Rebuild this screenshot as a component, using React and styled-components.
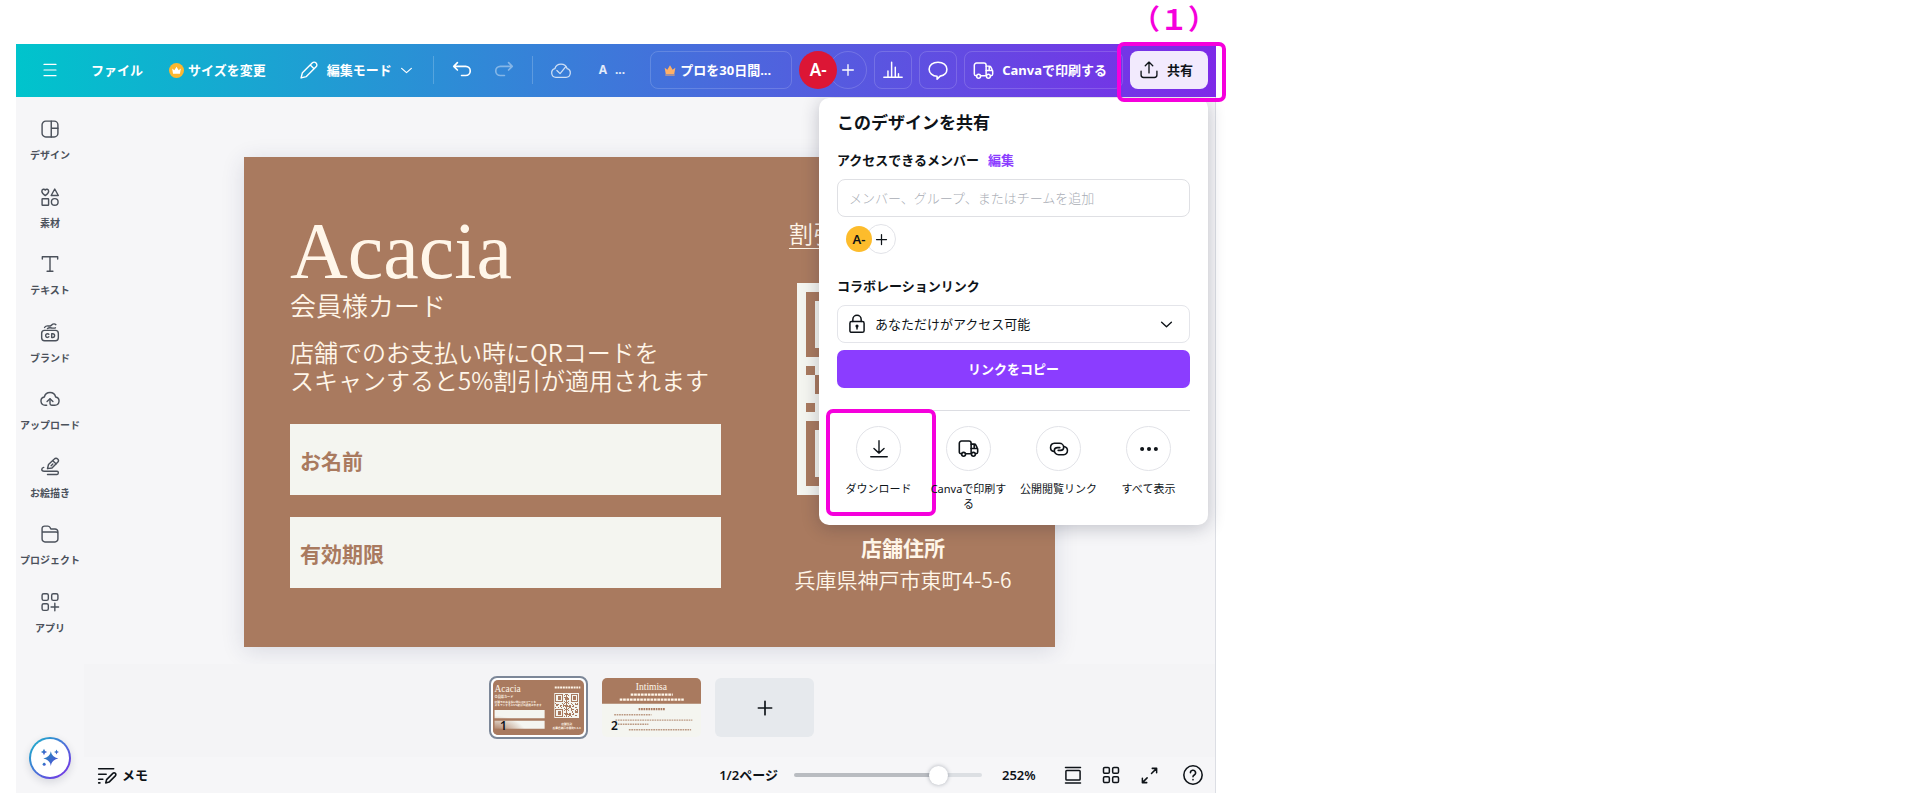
import { useState } from "react";
import styled, { createGlobalStyle } from "styled-components";

const SANS = '"Noto Sans", "Noto Sans CJK JP", sans-serif';
const CARD = '"Noto Sans CJK JP", sans-serif';
const BROWN = "#a97a5f";
const CREAM = "#f4f5f0";
const MARK = "#f500dc";

const GlobalStyle = createGlobalStyle`
  * {
    box-sizing: border-box;
  }
  body {
    margin: 0;
    background: #fff;
    color: #0e1318;
    font-family: ${SANS};
    font-size: 13px;
    line-height: 20px;
  }
  button, input, select {
    font: inherit;
    color: inherit;
    margin: 0;
  }
  button {
    background: none;
    border: none;
    padding: 0;
    cursor: pointer;
  }
  svg {
    display: block;
    flex-shrink: 0;
  }
`;

/* ---------- icons ---------- */

function Icon({ size = 20, width = 1.5, children, ...rest }) {
  return (
    <svg
      width={size}
      height={size}
      viewBox="0 0 24 24"
      fill="none"
      stroke="currentColor"
      strokeWidth={width}
      strokeLinecap="round"
      strokeLinejoin="round"
      aria-hidden="true"
      {...rest}
    >
      {children}
    </svg>
  );
}

const TruckIcon = (props) => (
  <Icon {...props}>
    <path d="M4.2 18H3.4A1.9 1.9 0 0 1 1.5 16.100V6a2.500 2.500 0 0 1 2.500-2.500h8.500A2.500 2.500 0 0 1 15 6v12H8.600" />
    <path d="M15 7h3.600a2 2 0 0 1 1.800 1.100l1.700 3.400c.3.500.4 1 .4 1.600v3a1.900 1.900 0 0 1-1.900 1.900M15 12h7.200M18.500 7v5" />
    <circle cx="6.400" cy="18.600" r="2.200" />
    <circle cx="17.600" cy="18.600" r="2.200" />
  </Icon>
);

const PlusIcon = (props) => (
  <Icon {...props}>
    <path d="M12 4v16M4 12h16" />
  </Icon>
);

const ChevronIcon = (props) => (
  <Icon {...props}>
    <path d="M3 8l9 8 9-8" />
  </Icon>
);

const CrownShape = () => (
  <path d="M4 8.500l4 3.200L12 5l4 6.700 4-3.200-1.600 9.500H5.600z" fill="currentColor" stroke="none" />
);

const sideItems = [
  {
    label: "デザイン",
    icon: (
      <>
        <rect x="2.500" y="2.500" width="19" height="19" rx="4.500" />
        <path d="M13.500 2.500v19M13.500 11h8" />
      </>
    ),
  },
  {
    label: "素材",
    icon: (
      <>
        <path d="M6.300 10.300C4 8.900 2.200 7.400 2.200 5.100c0-2.600 3-3.300 4.100-1.400 1.100-1.900 4.100-1.200 4.100 1.400 0 2.300-1.800 3.800-4.100 5.200z" />
        <path d="M17.700 2.400l4.300 7.800h-8.600z" />
        <rect x="2.500" y="14" width="7.800" height="7.800" rx=".6" />
        <circle cx="17.700" cy="17.900" r="4" />
      </>
    ),
  },
  {
    label: "テキスト",
    icon: <path d="M2.800 6V3.200h18.400V6M12 3.200v17.600M8.500 20.800h7" />,
  },
  {
    label: "ブランド",
    icon: (
      <>
        <rect x="2" y="10" width="20" height="12.500" rx="3.500" />
        <path d="M10.600 14.800a2.200 2.200 0 1 0 0 3M14 14h1.200a2.300 2.300 0 0 1 0 4.600H14zM5.500 6.500c3-4 5 0 8-2.500s4-2 5.500-.8M9 7.800c3-2.300 6 .7 9.500-.8" />
      </>
    ),
  },
  {
    label: "アップロード",
    icon: (
      <>
        <path d="M8 19.500H6.200a5 5 0 0 1-1-9.900 7 7 0 0 1 13.600 0 5 5 0 0 1-1 9.900H14c-1.200 0-2-.9-2-2V12" />
        <path d="M8.500 15l3.500-3.300 3.500 3.300" />
      </>
    ),
  },
  {
    label: "お絵描き",
    icon: (
      <>
        <path d="M9 14l1.200-5 7-6.600a2.800 2.800 0 0 1 4 4l-6.800 6.800zM16 5l3.500 3.500M13.400 10.400l2-2" />
        <path d="M4.500 12.500c-3 .7-3.500 4.500.5 4.500h15.500c2 0 2 4 0 4H9" />
      </>
    ),
  },
  {
    label: "プロジェクト",
    icon: (
      <path d="M2.500 9.500h17a2 2 0 0 1 2 2V18a3.500 3.500 0 0 1-3.500 3.500H6A3.500 3.500 0 0 1 2.500 18V5.500a3 3 0 0 1 3-3h4c1 0 1.900.5 2.400 1.400L13 6h5a3.500 3.500 0 0 1 3.500 3.500v3" />
    ),
  },
  {
    label: "アプリ",
    icon: (
      <>
        <rect x="2.500" y="2" width="7.500" height="8" rx="2" />
        <rect x="14" y="2" width="7.500" height="8" rx="2" />
        <rect x="2.500" y="14" width="7.500" height="8" rx="2" />
        <path d="M17.800 13.500v9M13.300 18h9" />
      </>
    ),
  },
];

/* ---------- header ---------- */

const StepLabel = styled.div`
  height: 44px;
  color: ${MARK};
  font-family: ${CARD};
  font-size: 28px;
  font-weight: 700;
  line-height: 36px;
  text-align: right;
`;

const Bar = styled.header`
  position: relative;
  z-index: 2;
  display: flex;
  align-items: center;
  justify-content: space-between;
  height: 53px;
  padding: 0 8px 1px 6px;
  background: linear-gradient(90deg, #00c4cc, #7d2ae8);
  color: #fff;
  font-weight: 700;
`;

const BarGroup = styled.div`
  display: flex;
  align-items: center;
  gap: ${({ $gap }) => $gap || 0}px;
`;

const MenuButton = styled.button`
  display: flex;
  align-items: center;
  gap: ${({ $gap }) => $gap || 4}px;
  height: 38px;
  padding: 0 13px;
  white-space: nowrap;
`;

const ToolButton = styled.button`
  display: grid;
  place-items: center;
  width: ${({ $wide }) => ($wide ? 56 : 42)}px;
  height: 38px;
  opacity: ${({ $faded }) => $faded || 1};
`;

const Divider = styled.span`
  width: 1px;
  height: 28px;
  background: rgba(255, 255, 255, 0.2);
`;

const CrownBadge = styled.span`
  display: grid;
  place-items: center;
  width: 15px;
  height: 15px;
  border-radius: 50%;
  background: #fdb730;
`;

const DocTitle = styled.span`
  display: flex;
  gap: 8px;
  padding-left: 10px;
  font-size: 12px;
  opacity: 0.85;
`;

const OutlineButton = styled.button`
  display: flex;
  align-items: center;
  justify-content: center;
  gap: ${({ $gap }) => $gap || 0}px;
  min-width: 38px;
  height: 38px;
  padding: ${({ $pad }) => $pad || "0"};
  border: 1px solid rgba(255, 255, 255, 0.16);
  border-radius: 8px;
  white-space: nowrap;
`;

const Members = styled.div`
  display: flex;
  align-items: center;
`;

const Avatar = styled.span`
  z-index: 1;
  display: grid;
  place-items: center;
  width: ${({ $size }) => $size}px;
  height: ${({ $size }) => $size}px;
  border-radius: 50%;
  background: ${({ $color }) => $color};
  font-size: ${({ $size }) => ($size > 30 ? 17 : 13)}px;
  font-weight: 600;
`;

const AddMember = styled.button`
  display: grid;
  place-items: center;
  width: ${({ $size }) => $size}px;
  height: ${({ $size }) => $size}px;
  margin-left: ${({ $overlap }) => -$overlap}px;
  border: 1px solid ${({ $line }) => $line};
  border-radius: 50%;
`;

const ShareWrap = styled.div`
  position: relative;

  &::after {
    content: "";
    position: absolute;
    inset: -9px -18px -13px -13px;
    border: 4px solid ${MARK};
    border-radius: 7px;
    pointer-events: none;
  }
`;

const ShareButton = styled.button`
  display: flex;
  align-items: center;
  gap: 8px;
  height: 38px;
  padding: 0 15px 0 9px;
  border-radius: 8px;
  background: #f2eafd;
  color: #0e1318;
`;

function Header() {
  return (
    <Bar>
      <BarGroup $gap={7}>
        <BarGroup>
          <ToolButton $wide aria-label="メニュー">
            <Icon size={18} width={1.6}>
              <path d="M4 4.500h16M4 12h16M4 19.500h16" />
            </Icon>
          </ToolButton>
          <MenuButton>ファイル</MenuButton>
          <MenuButton>
            <CrownBadge>
              <Icon size={13}>
                <CrownShape />
              </Icon>
            </CrownBadge>
            サイズを変更
          </MenuButton>
        </BarGroup>
        <MenuButton $gap={8}>
          <Icon size={20} width={1.7}>
            <path d="M2.500 21.500l1.600-6.300L15.800 3.500a3.300 3.300 0 0 1 4.700 4.700L8.800 19.900zM13.500 6l4.600 4.600" />
          </Icon>
          編集モード
          <ChevronIcon size={13} width={2.2} />
        </MenuButton>
        <Divider />
        <BarGroup>
          <ToolButton aria-label="元に戻す">
            <Icon size={22} width={1.8}>
              <path d="M7 4L3 8l4 4M3.500 8H16a5 5 0 0 1 0 10h-4.500" />
            </Icon>
          </ToolButton>
          <ToolButton $faded={0.4} aria-label="やり直す">
            <Icon size={22} width={1.8}>
              <path d="M17 4l4 4-4 4M20.500 8H8a5 5 0 0 0 0 10h4.500" />
            </Icon>
          </ToolButton>
        </BarGroup>
        <Divider />
        <ToolButton $faded={0.75} aria-label="保存済み">
          <Icon size={22} width={1.4}>
            <path d="M6.500 20a4.800 4.800 0 0 1-1.200-9.400 7 7 0 0 1 13.400 0A4.800 4.800 0 0 1 17.500 20z" />
            <path d="M7.500 12.500l3.500 3.500 6-7.500" />
          </Icon>
        </ToolButton>
        <DocTitle>
          <span>A</span>
          <span>...</span>
        </DocTitle>
      </BarGroup>

      <BarGroup $gap={7}>
        <OutlineButton $gap={2} $pad="0 20px 0 11px">
          <Icon size={16} color="#ffb066">
            <CrownShape />
            <path d="M5.600 19.500h12.800" />
          </Icon>
          プロを30日間...
        </OutlineButton>
        <Members>
          <Avatar $size={38} $color="#dc1635">
            A-
          </Avatar>
          <AddMember $size={38} $overlap={8} $line="rgba(255,255,255,.16)" aria-label="メンバーを追加">
            <PlusIcon size={16} width={2} />
          </AddMember>
        </Members>
        <OutlineButton aria-label="分析">
          <Icon size={22} width={1.6}>
            <path d="M2 20h20M6.500 20v-7M10.500 20V3.500M14.500 20V9M18 20v-4" />
          </Icon>
        </OutlineButton>
        <OutlineButton aria-label="コメント">
          <Icon size={22} width={1.7}>
            <path d="M12 3.500c5.600 0 9.700 3.300 9.700 7.700 0 4-3 6.800-7.300 7.500L11 22v-3.200c-5-.3-8.700-3.500-8.700-7.600C2.300 6.800 6.400 3.500 12 3.500z" />
          </Icon>
        </OutlineButton>
        <OutlineButton $gap={8} $pad="0 15px 0 8px">
          <TruckIcon size={21} width={1.7} />
          Canvaで印刷する
        </OutlineButton>
        <ShareWrap>
          <ShareButton>
            <Icon size={20} width={1.6}>
              <path d="M2.500 13.500V18a3 3 0 0 0 3 3h13a3 3 0 0 0 3-3v-4.500M12 15.500V2.500M7.500 7L12 2.500 16.500 7" />
            </Icon>
            共有
          </ShareButton>
        </ShareWrap>
      </BarGroup>
    </Bar>
  );
}

/* ---------- side navigation ---------- */

const Side = styled.nav`
  display: flex;
  flex-direction: column;
  justify-content: space-between;
  align-items: center;
  width: 68px;
  padding: 10px 0 14px;
`;

const SideList = styled.div`
  display: grid;
  grid-auto-rows: 1fr;
  height: 540px;
`;

const SideButton = styled.button`
  display: flex;
  flex-direction: column;
  align-items: center;
  gap: 8px;
  padding-top: 12px;
  color: #4b515b;
  font-size: 10px;
  font-weight: 700;
  line-height: 16px;
  white-space: nowrap;
`;

const MagicButton = styled.button`
  display: grid;
  place-items: center;
  width: 42px;
  height: 42px;
  border: 2px solid transparent;
  border-radius: 50%;
  background:
    linear-gradient(#fff, #fff) padding-box,
    linear-gradient(135deg, #14b8c8, #7d2ae8) border-box;
  box-shadow: 0 3px 8px rgba(20, 30, 60, 0.14);
`;

function SideNav() {
  return (
    <Side>
      <SideList>
        {sideItems.map(({ label, icon }) => (
          <SideButton key={label}>
            <Icon size={20} width={1.7}>
              {icon}
            </Icon>
            {label}
          </SideButton>
        ))}
      </SideList>
      <MagicButton aria-label="クイックアクション">
        <svg width="20" height="20" viewBox="0 0 24 24" aria-hidden="true">
          <defs>
            <linearGradient id="magic" x1="0" y1="0" x2="1" y2="1">
              <stop offset="0" stopColor="#1e94b8" />
              <stop offset="1" stopColor="#5546dc" />
            </linearGradient>
          </defs>
          <g fill="url(#magic)">
            <path d="M13 4q1 7 9 8.500Q14 14 13 21.500 12 14 4 12.500 12 11 13 4z" />
            <path d="M4.800 1q.5 3.100 3.800 3.800-3.300.7-3.800 3.800Q4.300 5.500 1 4.800 4.300 4.100 4.800 1z" />
            <path d="M19.800 1.800q.4 2.600 3 3-2.600.4-3 3-.4-2.600-3-3 2.600-.4 3-3z" />
            <circle cx="5" cy="19.500" r="1.800" />
          </g>
        </svg>
      </MagicButton>
    </Side>
  );
}

/* ---------- member card ---------- */

const QR_SIZE = 21;
const QR_LEFT = { 8: [1, 0], 9: [0, 1], 10: [0, 1], 11: [0, 0], 12: [1, 0] };

function isDark(x, y) {
  for (const [fx, fy] of [[0, 0], [14, 0], [0, 14]]) {
    const dx = x - fx;
    const dy = y - fy;
    if (dx >= -1 && dx <= 7 && dy >= -1 && dy <= 7) {
      const ring = Math.max(Math.abs(dx - 3), Math.abs(dy - 3));
      return ring === 3 || ring <= 1;
    }
  }
  if (x < 2 && QR_LEFT[y]) return Boolean(QR_LEFT[y][x]);
  return (x * 7 + y * 13 + x * y * 5 + ((x * x) % 5)) % 7 < 3;
}

const qrPath = Array.from({ length: QR_SIZE * QR_SIZE }, (_, i) => [i % QR_SIZE, Math.floor(i / QR_SIZE)])
  .filter(([x, y]) => isDark(x, y))
  .map(([x, y]) => `M${x + 1} ${y + 1}h1v1h-1z`)
  .join("");

const QrCode = (props) => (
  <svg viewBox="0 0 23 23" shapeRendering="crispEdges" aria-hidden="true" {...props}>
    <path d="M0 0h23v23H0z" fill={CREAM} />
    <path d={qrPath} fill={BROWN} />
  </svg>
);

const MemberCard = styled.article`
  display: grid;
  grid-template-columns: minmax(0, 431fr) minmax(0, 212fr);
  column-gap: 76px;
  padding: 58px 46px 37px;
  background: ${BROWN};
  color: #fff6e9;
  font-family: ${CARD};
  font-weight: 350;
  box-shadow: 0 4px 22px rgba(40, 50, 90, 0.14);
`;

const CardName = styled.h1`
  margin: 0;
  font-family: "Liberation Serif", serif;
  font-size: 80px;
  font-weight: 400;
  line-height: 72px;
`;

const CardKind = styled.p`
  margin: 0;
  font-size: 26px;
  line-height: 36px;
`;

const CardNote = styled.p`
  margin: 15px 0 30px;
  font-size: 24px;
  line-height: 28px;
  white-space: nowrap;
`;

const CardField = styled.div`
  display: flex;
  align-items: center;
  height: 71px;
  margin-bottom: 22px;
  padding: 0 10px;
  background: ${CREAM};
  color: ${BROWN};
  font-size: 21px;
  font-weight: 700;
`;

const CardSide = styled.div`
  display: flex;
  flex-direction: column;
  align-items: center;
  padding-top: 2px;
  font-size: 21px;
  line-height: 32px;
  white-space: nowrap;

  b {
    font-weight: 700;
  }

  svg {
    width: 100%;
    height: auto;
    margin: 34px 0 36px;
  }
`;

const CardOffer = styled.u`
  align-self: flex-start;
  margin-left: -8px;
  font-size: 24px;
  text-decoration-thickness: 1px;
  text-underline-offset: 5px;
`;

/* ---------- pages strip and footer ---------- */

const Work = styled.main`
  flex: 1;
  min-width: 0;
  display: flex;
  flex-direction: column;
`;

const Canvas = styled.section`
  padding: 60px 160px 17px;
`;

const Strip = styled.section`
  display: flex;
  align-items: center;
  justify-content: center;
  gap: 14px;
  height: 93px;
  padding: 0 0 6px 4px;
  background: #f4f4f6;
`;

const PageThumb = styled.button`
  position: relative;
  width: 99px;
  height: ${({ $active }) => ($active ? 63 : 59)}px;
  padding: ${({ $active }) => ($active ? 2 : 0)}px;
  border: ${({ $active }) => ($active ? "2px solid #7c8798" : "none")};
  border-radius: 8px;
  background: ${({ $active }) => ($active ? "#fff" : "none")};

  > svg {
    width: 100%;
    height: 100%;
    border-radius: 5px;
  }
`;

const PageNumber = styled.span`
  position: absolute;
  left: 9px;
  bottom: 3px;
  font-size: 12px;
  font-weight: 600;
  line-height: 16px;
`;

const AddPage = styled.button`
  display: grid;
  place-items: center;
  width: 99px;
  height: 59px;
  border-radius: 6px;
  background: #e6e9ed;
`;

const Foot = styled.footer`
  display: flex;
  align-items: center;
  justify-content: space-between;
  height: 36px;
  padding-right: 3px;
  font-weight: 600;
`;

const FootGroup = styled.div`
  display: flex;
  align-items: center;
`;

const ViewButtons = styled(FootGroup)`
  padding-right: 6px;
`;

const FootIcon = styled.button`
  display: grid;
  place-items: center;
  width: 38px;
  height: 32px;
`;

const ZoomSlider = styled.input`
  appearance: none;
  width: 188px;
  height: 4px;
  margin: 0 20px 0 16px;
  border-radius: 2px;
  background: linear-gradient(90deg, #b9bcc1 77%, #dcdfe3 77%);

  &::-webkit-slider-thumb {
    appearance: none;
    width: 19px;
    height: 19px;
    border-radius: 50%;
    background: #fff;
    box-shadow: 0 0 4px rgba(30, 40, 60, 0.35);
  }
`;

const ZoomValue = styled.output`
  width: 52px;
`;

function FrontThumb() {
  return (
    <svg viewBox="0 0 811 490" preserveAspectRatio="xMinYMid slice" aria-hidden="true">
      <defs>
        <radialGradient id="shade" cx="0" cy="1" r=".6">
          <stop offset=".3" stopColor={BROWN} />
          <stop offset="1" stopColor={BROWN} stopOpacity="0" />
        </radialGradient>
      </defs>
      <path d="M0 0h811v490H0z" fill={BROWN} />
      <g fill="#fff6e9" fontFamily={CARD} fontSize="24">
        <text x="14" y="104" fontSize="84" fontFamily="Liberation Serif, serif">
          Acacia
        </text>
        <text x="14" y="158" fontSize="28" fontWeight="700">会員様カード</text>
        <text x="14" y="204" fontWeight="700">店舗でのお支払い時にQRコードを</text>
        <text x="14" y="234" fontWeight="700">スキャンすると5%割引が適用されます</text>
        <text x="657" y="402" textAnchor="middle" fontWeight="700">店舗住所</text>
        <text x="657" y="438" textAnchor="middle" fontWeight="700">兵庫県神戸市東町4-5-6</text>
      </g>
      <path d="M550 66h228" stroke="#fff6e9" strokeWidth="18" strokeDasharray="18 6" />
      <path d="M14 268h446v72H14zM14 362h446v72H14z" fill={CREAM} />
      <path d="M0 200h500v290H0z" fill="url(#shade)" opacity=".9" />
      <QrCode x="546" y="116" width="222" height="222" />
    </svg>
  );
}

function BackThumb() {
  return (
    <svg viewBox="0 0 811 490" preserveAspectRatio="none" aria-hidden="true">
      <path d="M0 0h811v490H0z" fill={CREAM} />
      <path d="M0 0h811v214H0z" fill={BROWN} />
      <text
        x="405"
        y="96"
        textAnchor="middle"
        fill="#fff6e9"
        fontSize="78"
        fontFamily="Liberation Serif, serif"
      >
        Intimisa
      </text>
      <g stroke="#fff6e9" strokeWidth="18" strokeDasharray="22 6">
        <path d="M235 138h345" />
        <path d="M145 180h525" />
      </g>
      <g stroke={BROWN} strokeWidth="12" strokeDasharray="14 6">
        <path d="M300 258h215" strokeWidth="18" />
        <path d="M100 306h305M110 350h630M110 384h270M220 430h510" opacity=".75" />
      </g>
    </svg>
  );
}

function Footer() {
  const [zoom, setZoom] = useState(80);
  return (
    <Foot>
      <MenuButton $gap={5}>
        <Icon size={20} width={1.9}>
          <path d="M2 4.500h18M2 11h9M2 17h5M2 21.500h1.500M10.500 21.500l1-4 7.500-7.500a2 2 0 0 1 3 3l-7.500 7.500z" />
        </Icon>
        メモ
      </MenuButton>
      <FootGroup>
        <span>1/2ページ</span>
        <ZoomSlider
          type="range"
          aria-label="ズーム"
          value={zoom}
          onChange={(e) => setZoom(Number(e.target.value))}
        />
        <ZoomValue>252%</ZoomValue>
        <ViewButtons>
          <FootIcon aria-label="スクロール表示">
            <Icon size={20} width={1.8}>
              <path d="M3 3h18M3 21.500h18" />
              <rect x="3.500" y="6.500" width="17" height="11.500" rx="1" />
            </Icon>
          </FootIcon>
          <FootIcon aria-label="グリッド表示">
            <Icon size={20} width={1.8}>
              <rect x="3" y="3" width="7" height="7" rx="1.500" />
              <rect x="14" y="3" width="7" height="7" rx="1.500" />
              <rect x="3" y="14" width="7" height="7" rx="1.500" />
              <rect x="14" y="14" width="7" height="7" rx="1.500" />
            </Icon>
          </FootIcon>
          <FootIcon aria-label="全画面表示">
            <Icon size={19} width={1.9}>
              <path d="M15.500 3H21v5.500M21 3l-6.500 6.500M3 15.500V21h5.500M3 21l6-6" />
            </Icon>
          </FootIcon>
        </ViewButtons>
        <FootIcon aria-label="ヘルプ">
          <Icon size={22} width={1.7}>
            <circle cx="12" cy="12" r="10" />
            <path d="M9.200 9.600a2.800 2.800 0 1 1 4.200 2.400c-.9.500-1.400 1-1.400 2M12 17v.3" />
          </Icon>
        </FootIcon>
      </FootGroup>
    </Foot>
  );
}

/* ---------- share panel ---------- */

const Panel = styled.section`
  position: absolute;
  top: 1px;
  right: 7px;
  z-index: 1;
  width: 389px;
  padding: 13px 18px 14px;
  border-radius: 10px;
  background: #fff;
  box-shadow: 0 3px 18px rgba(20, 25, 50, 0.24);
`;

const PanelTitle = styled.h2`
  margin: 0 0 15px;
  font-size: 17px;
  line-height: 24px;
`;

const PanelLabel = styled.div`
  display: flex;
  gap: 9px;
  margin-bottom: 9px;
  font-weight: 700;
  line-height: 20px;

  a {
    color: #8b3dff;
    text-decoration: none;
  }
`;

const PanelInput = styled.input`
  display: block;
  width: 100%;
  height: 38px;
  padding: 0 11px;
  border: 1px solid #dfe0e4;
  border-radius: 8px;
  outline: none;

  &::placeholder {
    color: #a9adb5;
    font-weight: 300;
  }
`;

const PanelMembers = styled(Members)`
  margin: 7px 0 22px;
  padding-left: 9px;
`;

const AccessBox = styled.div`
  display: flex;
  align-items: center;
  gap: 8px;
  height: 38px;
  padding: 0 16px 0 9px;
  border: 1px solid #e4e5ea;
  border-radius: 8px;

  select {
    flex: 1;
    appearance: none;
    padding: 0;
    border: none;
    background: none;
    outline: none;
  }
`;

const CopyButton = styled.button`
  display: block;
  width: 100%;
  height: 38px;
  margin: 7px 0 22px;
  border-radius: 7px;
  background: #8b3dff;
  color: #fff;
  font-weight: 700;
`;

const Actions = styled.div`
  display: grid;
  grid-template-columns: repeat(4, 90px);
  justify-content: center;
  padding-top: 15px;
  border-top: 1px solid #dcdde2;
`;

const Action = styled.button`
  position: relative;
  display: flex;
  flex-direction: column;
  align-items: center;
  gap: 10px;
  padding: 0 5px;
  font-size: 11px;
  line-height: 15px;

  &::after {
    content: "";
    display: ${({ $marked }) => ($marked ? "block" : "none")};
    position: absolute;
    inset: -17px -12px -5px -8px;
    border: 4px solid ${MARK};
    border-radius: 7px;
  }
`;

const ActionCircle = styled.span`
  display: grid;
  place-items: center;
  width: 45px;
  height: 45px;
  border: 1px solid #e2e3e8;
  border-radius: 50%;
`;

const actions = [
  {
    label: "ダウンロード",
    marked: true,
    icon: (
      <Icon size={22}>
        <path d="M3 20.500h18M12 3v13.500M6.500 11.500l5.500 5 5.500-5" />
      </Icon>
    ),
  },
  { label: "Canvaで印刷する", icon: <TruckIcon size={21} width={1.8} /> },
  {
    label: "公開閲覧リンク",
    icon: (
      <Icon size={22} width={1.7}>
        <path d="M6.500 14.800a4.600 4.600 0 0 1 .5-9.100h5.500a4.600 4.600 0 0 1 4.600 4.600c0 2-1.600 3.200-3.500 3.200h-2.500" />
        <path d="M17.500 9.200a4.600 4.600 0 0 1-.5 9.100h-5.500a4.600 4.600 0 0 1-4.600-4.600c0-2 1.600-3.200 3.500-3.200h2.500" />
      </Icon>
    ),
  },
  {
    label: "すべて表示",
    icon: (
      <Icon size={22} width={4.4}>
        <path d="M4.500 12h.01M12 12h.01M19.500 12h.01" />
      </Icon>
    ),
  },
];

function SharePanel() {
  return (
    <Panel>
      <PanelTitle>このデザインを共有</PanelTitle>
      <PanelLabel>
        <label htmlFor="members">アクセスできるメンバー</label>
        <a href="#edit">編集</a>
      </PanelLabel>
      <PanelInput id="members" placeholder="メンバー、グループ、またはチームを追加" />
      <PanelMembers>
        <Avatar $size={26} $color="#fdbc2c">
          A-
        </Avatar>
        <AddMember $size={30} $overlap={6} $line="#e2e3e8" aria-label="メンバーを追加">
          <PlusIcon size={15} width={2} />
        </AddMember>
      </PanelMembers>
      <PanelLabel>
        <label htmlFor="access">コラボレーションリンク</label>
      </PanelLabel>
      <AccessBox>
        <Icon size={20} width={1.8}>
          <rect x="3.500" y="9" width="17" height="13" rx="2" />
          <path d="M7 9V6.500a5 5 0 0 1 10 0V9M12 15v3" />
          <circle cx="12" cy="14.500" r="1" fill="currentColor" />
        </Icon>
        <select id="access">
          <option>あなただけがアクセス可能</option>
        </select>
        <ChevronIcon size={13} width={2.6} />
      </AccessBox>
      <CopyButton>リンクをコピー</CopyButton>
      <Actions>
        {actions.map(({ label, icon, marked }) => (
          <Action key={label} $marked={marked}>
            <ActionCircle>{icon}</ActionCircle>
            {label}
          </Action>
        ))}
      </Actions>
    </Panel>
  );
}

/* ---------- page ---------- */

const Editor = styled.div`
  width: 62.5%;
  margin-left: 16px;
`;

const Body = styled.div`
  position: relative;
  display: flex;
  border-right: 1px solid #dcdee4;
  background: #f6f6f8;
`;

export default function App() {
  return (
    <>
      <GlobalStyle />
      <Editor>
        <StepLabel>（１）</StepLabel>
        <Header />
        <Body>
          <SideNav />
          <Work>
            <Canvas>
              <MemberCard>
                <div>
                  <CardName>Acacia</CardName>
                  <CardKind>会員様カード</CardKind>
                  <CardNote>
                    店舗でのお支払い時にQRコードを
                    <br />
                    スキャンすると5%割引が適用されます
                  </CardNote>
                  <CardField>お名前</CardField>
                  <CardField>有効期限</CardField>
                </div>
                <CardSide>
                  <CardOffer>割引</CardOffer>
                  <QrCode />
                  <b>店舗住所</b>
                  <span>兵庫県神戸市東町4-5-6</span>
                </CardSide>
              </MemberCard>
            </Canvas>
            <Strip>
              <PageThumb $active aria-label="ページ1">
                <FrontThumb />
                <PageNumber>1</PageNumber>
              </PageThumb>
              <PageThumb aria-label="ページ2">
                <BackThumb />
                <PageNumber>2</PageNumber>
              </PageThumb>
              <AddPage aria-label="ページを追加">
                <PlusIcon size={20} width={2} />
              </AddPage>
            </Strip>
            <Footer />
          </Work>
          <SharePanel />
        </Body>
      </Editor>
    </>
  );
}
